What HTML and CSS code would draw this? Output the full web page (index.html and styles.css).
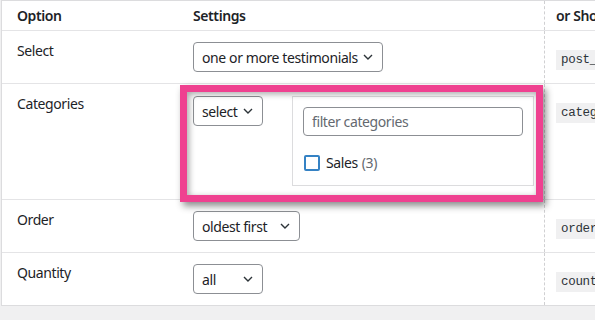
FILE: index.html
```html
<!DOCTYPE html>
<html>
<head>
<meta charset="UTF-8">
<link rel="stylesheet" href="styles.css">
<title>Testimonials options</title>
</head>
<body>
<div class="opts">
  <div class="row head">
    <div class="c1">Option</div>
    <div class="c2">Settings</div>
    <div class="c3">or Shortcode</div>
  </div>

  <div class="row">
    <div class="c1">Select</div>
    <div class="c2">
      <div class="sel w-one">one or more testimonials
        <svg class="chev" width="10" height="6" viewBox="0 0 10 6"><path d="M1 1l4 4 4-4"/></svg>
      </div>
    </div>
    <div class="c3"><code>post__in</code></div>
  </div>

  <div class="row">
    <div class="c1">Categories</div>
    <div class="c2 cats">
      <div class="sel w-small">select
        <svg class="chev" width="10" height="6" viewBox="0 0 10 6"><path d="M1 1l4 4 4-4"/></svg>
      </div>
      <div class="catpanel">
        <input class="filter" type="text" placeholder="filter categories">
        <label class="catitem"><span class="box"></span>Sales <span class="count">(3)</span></label>
      </div>
    </div>
    <div class="c3"><code>category</code></div>
  </div>

  <div class="row">
    <div class="c1">Order</div>
    <div class="c2">
      <div class="sel w-order">oldest first
        <svg class="chev" width="10" height="6" viewBox="0 0 10 6"><path d="M1 1l4 4 4-4"/></svg>
      </div>
    </div>
    <div class="c3"><code>orderby</code></div>
  </div>

  <div class="row last">
    <div class="c1">Quantity</div>
    <div class="c2">
      <div class="sel w-all">all
        <svg class="chev" width="10" height="6" viewBox="0 0 10 6"><path d="M1 1l4 4 4-4"/></svg>
      </div>
    </div>
    <div class="c3"><code>count</code></div>
  </div>
</div>

<!-- annotation frame drawn over the categories row -->
<div class="highlight"></div>
</body>
</html>
```

FILE: styles.css
```css
body{
  margin:0;
  background-color:#f0f0f1;
  font-family:"Noto Sans","Open Sans",sans-serif;
  font-size:14px;
  letter-spacing:-0.4px;
  color:#1d2327;
  overflow:hidden;
}

.opts{
  width:700px;
  margin-left:1px;
  background-color:#fff;
  border:1px solid #dcdcde;
  border-right:none;
}

.row{
  display:grid;
  grid-template-columns:191px 351px 1fr;
  border-top:1px solid #e4e4e6;
  height:53px;
  box-sizing:border-box;
}
.row.head{
  border-top:none;
  height:29px;
  font-weight:600;
}
.row:nth-child(3){
  height:116px;
}

.c1{
  padding:10px 0 0 15px;
  line-height:20px;
}
.c2{
  padding:11px 0 0 0;
}
.head .c1, .head .c2{
  padding-top:5px;
}
.c3{
  border-left:1px dashed #d0d0d2;
  padding:17px 0 0 11px;
  white-space:nowrap;
}
.head .c3{
  padding-top:5px;
  line-height:20px;
}

code{
  font-family:"Liberation Mono","DejaVu Sans Mono",monospace;
  font-size:12.5px;
  letter-spacing:-0.3px;
  background-color:#f0f0f1;
  padding:3px 5px;
  color:#2c3338;
}

.sel{
  display:flex;
  align-items:center;
  justify-content:space-between;
  box-sizing:border-box;
  height:30px;
  padding:0 9px 0 8px;
  border:1px solid #8c8f94;
  border-radius:4px;
  background-color:#fff;
  white-space:nowrap;
}
.w-one{ width:190px; }
.w-small{ width:70px; }
.w-order{ width:107px; }
.w-all{ width:70px; }

.chev{
  fill:none;
  stroke:#2c3338;
  stroke-width:1.4;
  flex:none;
}

.cats{
  display:flex;
  align-items:flex-start;
  padding-top:12px;
}
.catpanel{
  margin-left:29px;
  width:242px;
  box-sizing:border-box;
  border:1px solid #dcdcde;
  padding:10px 10px 12px 10px;
}
.filter{
  display:block;
  box-sizing:border-box;
  width:220px;
  height:29px;
  border:1px solid #8c8f94;
  border-radius:4px;
  padding:0 8px;
  font:inherit;
  letter-spacing:inherit;
  color:#2c3338;
}
.filter::placeholder{
  color:#646970;
}
.catitem{
  display:flex;
  align-items:center;
  margin-top:17px;
  line-height:20px;
}
.box{
  width:16px;
  height:16px;
  box-sizing:border-box;
  border:2px solid #3582c4;
  border-radius:2px;
  margin:0 6px 0 1px;
}
.count{
  color:#646970;
  margin-left:4px;
}

.highlight{
  position:absolute;
  left:180px;
  top:85px;
  width:363px;
  height:117px;
  box-sizing:border-box;
  border:7px solid #ef4190;
  box-shadow:3px 4px 7px rgba(0,0,0,.45), inset 2px 2px 6px rgba(0,0,0,.35);
}
```
